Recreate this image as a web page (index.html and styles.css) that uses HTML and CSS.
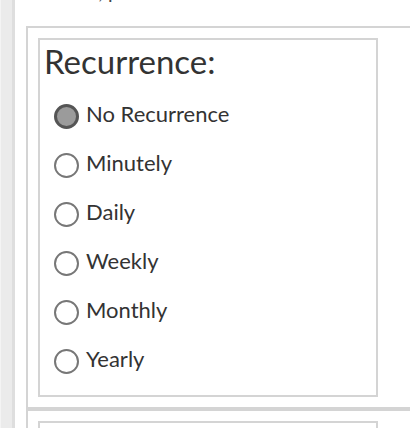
FILE: index.html
```html
<!DOCTYPE html>
<html>
<head>
<meta charset="utf-8">
<link rel="stylesheet" href="styles.css">
</head>
<body>
<div class="page">
  <div class="rail"></div>
  <div class="main">
    <p class="hint">Set date, press Enter</p>
    <div class="section">
      <div class="group">
        <div class="title">Recurrence:</div>
        <label class="opt"><input type="radio" name="rec" checked><span>No Recurrence</span></label>
        <label class="opt"><input type="radio" name="rec"><span>Minutely</span></label>
        <label class="opt"><input type="radio" name="rec"><span>Daily</span></label>
        <label class="opt"><input type="radio" name="rec"><span>Weekly</span></label>
        <label class="opt"><input type="radio" name="rec"><span>Monthly</span></label>
        <label class="opt"><input type="radio" name="rec"><span>Yearly</span></label>
      </div>
    </div>
    <div class="section">
      <div class="group tall"></div>
    </div>
  </div>
</div>
</body>
</html>
```
FILE: styles.css
```css
html, body {
  margin: 0;
  padding: 0;
  background: #fff;
  overflow: hidden;
  height: 428px;
}
.page {
  display: flex;
  height: 428px;
  overflow: hidden;
  font-family: Lato, "Noto Sans", sans-serif;
  color: #333;
}
.rail {
  flex: 0 0 11px;
  border-left: 1px solid #f4f4f4;
  border-right: 3px solid #dedede;
  background: #ebebeb;
}
.main {
  flex: 1 1 auto;
  padding-left: 11px;
  display: flex;
  flex-direction: column;
  min-width: 0;
  overflow: hidden;
}
.hint {
  margin: -20px 0 0 0;
  height: 46px;
  flex: 0 0 auto;
  font-size: 20px;
  line-height: 22px;
  color: #444;
  white-space: nowrap;
}
.section {
  border: 2px solid #d4d4d4;
  padding: 10px;
  width: 420px;
  flex: 0 0 auto;
}
.group {
  width: 332px;
  border: 2px solid #d4d4d4;
  padding: 0 0 12px 4px;
}
.group.tall {
  height: 40px;
}
.title {
  font-size: 33px;
  line-height: 36px;
  padding-top: 3px;
  height: 46px;
  font-weight: 400;
}
.opt {
  display: flex;
  align-items: center;
  height: 49px;
  font-size: 22px;
  padding-left: 10px;
}
.opt input {
  appearance: none;
  -webkit-appearance: none;
  margin: 6px 7px 0 0;
  width: 25px;
  height: 25px;
  border-radius: 50%;
  border: 2px solid #777;
  background: #fff;
  box-sizing: border-box;
  flex: 0 0 auto;
}
.opt input:checked {
  border: 3px solid #555;
  background: #9b9b9b;
}
```
